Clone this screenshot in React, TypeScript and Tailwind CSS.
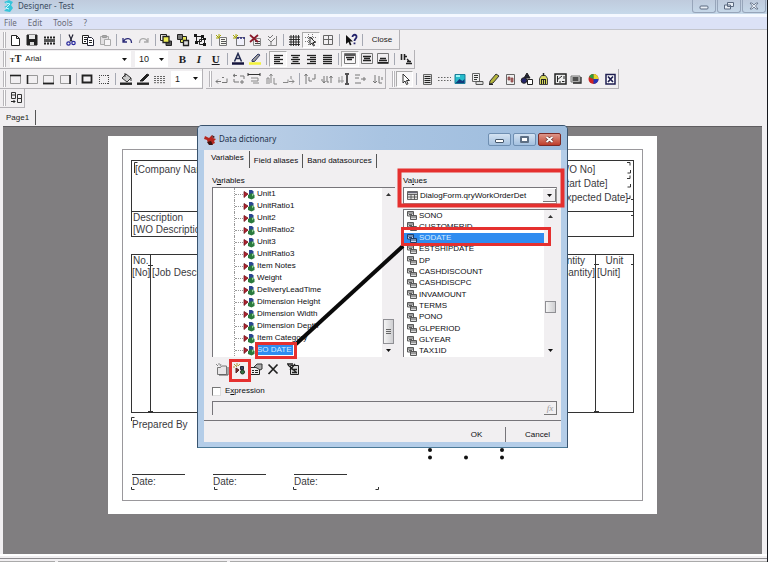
import React from "react";

type Kids = { children?: React.ReactNode };

/* ---------- icon drawings, all on a 14 x 14 grid ---------- */

function Ico({ children, size = 14 }: Kids & { size?: number }) {
  return (
    <svg width={size} height={size} viewBox="0 0 14 14" fill="none" stroke="#222" strokeWidth="1" aria-hidden="true" className="block shrink-0">
      {children}
    </svg>
  );
}

const bars = (ws: number[], x0 = (_w: number) => 3) =>
  ws.map((w, i) => <path key={i} d={`M${x0(w)} ${3.5 + i * 2}h${w}`} strokeWidth="1.3" />);

const icons: Record<string, React.ReactNode> = {
  fresh: <path d="M3.5 2.5h5l3 3v7h-8zM8.5 2.5v3h3" fill="#fff" />,
  save: (
    <>
      <path d="M2 2h10v10H2z" fill="#222" />
      <path d="M4 2h6v4H4z" fill="#e8e8e8" stroke="none" />
      <path d="M5 9h4v3H5z" fill="#ddd" stroke="none" />
    </>
  ),
  film: (
    <>
      <path d="M2 4.500h11M2 10.500h11" strokeWidth="2" strokeDasharray="2 1" />
      <path d="M2 7.500h11" strokeWidth="3" stroke="#555" />
    </>
  ),
  cut: (
    <>
      <path d="M5 1.500l3 7M9 1.500l-3 7" stroke="#223" strokeWidth="1.200" />
      <circle cx="4.500" cy="10.500" r="1.700" stroke="#25259c" strokeWidth="1.200" />
      <circle cx="9.500" cy="10" r="1.700" stroke="#25259c" strokeWidth="1.200" />
    </>
  ),
  copy: (
    <>
      <path d="M1.500 2.500h6v8h-6z" fill="#fff" />
      <path d="M3 4.500h3M3 6.500h3M3 8.500h2" />
      <path d="M6.500 4.500h4l2 2v6h-6z" fill="#fff" stroke="#223" />
      <path d="M8 7.500h3M8 9.500h3" />
    </>
  ),
  paste: (
    <>
      <path d="M2.500 3.500h8v8h-8z" stroke="#aaa" fill="#e2e0e2" />
      <path d="M4.500 2.500h4v2h-4z" stroke="#999" />
      <path d="M6.500 6.500h6v6h-6z" stroke="#aaa" fill="#f6f4f6" />
    </>
  ),
  undo: <path d="M3 5v4h4M3.500 8.500c2-4 8-4 8 1.500" stroke="#2b2b78" strokeWidth="1.300" />,
  redo: <path d="M11 5v4H7M10.500 8.500c-2-4-8-4-8 1.500" stroke="#aaa" strokeWidth="1.300" />,
  front: (
    <>
      <path d="M1.500 1.500h6v6h-6z" />
      <path d="M7 8h5.500v4.500H7z" fill="#555" />
      <path d="M4 3.500h6v6H4z" fill="#ecec55" stroke="#222" strokeWidth="1.300" />
    </>
  ),
  back: (
    <>
      <path d="M4.500 3.500h6v6h-6z" fill="#e4e45a" />
      <path d="M1.500 1.500h5v5h-5z" fill="#777" />
      <path d="M7.500 7.500h5v5h-5z" fill="#ddd" strokeWidth="1.300" />
    </>
  ),
  group: (
    <>
      <path d="M3.500 3.500h5v5h-5zM6.500 6.500h5v5h-5z" />
      <path d="M1 1h3v3H1zM8 2h3v3H8zM2 8h3v3H2zM10 10h3v3h-3zM10 5h3v2h-3z" fill="#181818" stroke="none" />
    </>
  ),
  addband: (
    <>
      <path d="M4.500 4.500h7v8h-7z" fill="#f6f6f0" stroke="#777" />
      <path d="M6 6.500h4M6 8.500h5M6 10.500h5" stroke="#555" />
      <path d="M1 2l3 3M4 1v4M1 5h3M6 2L4 4" stroke="#a4a400" />
    </>
  ),
  addform: (
    <>
      <path d="M4.500 4.500h8v8h-8z" fill="#f0f0fa" stroke="#777" />
      <path d="M5 5h8" stroke="#2a2a7c" strokeWidth="1.600" strokeDasharray="2 1" />
      <path d="M1 2l3 3M4 1v4M1 5h3M6 2L4 4" stroke="#a4a400" />
    </>
  ),
  del: (
    <>
      <path d="M5.500 5.500h7v7h-7z" fill="#f0eef0" stroke="#888" />
      <path d="M7 8.500h5M7 10.500h5" stroke="#444" />
      <path d="M2 2l8 7M10 2L2 9" stroke="#8a1a2a" strokeWidth="1.700" />
    </>
  ),
  props: (
    <>
      <path d="M11.500 3v9.500H3" stroke="#888" />
      <path d="M3 3l2 2 3-3M3 6l3 3 4-4M6 9v3" stroke="#777" />
    </>
  ),
  grid: <path d="M4 2v11M6.500 2v11M9 2v11M11.500 2v11M2 4h11M2 6.500h11M2 9h11M2 11.500h11" strokeWidth=".9" />,
  snap: (
    <>
      <path d="M4.500 1v11M8.500 1v11M1 4.500h11M1 8.500h11" stroke="#777" strokeDasharray="1 1" />
      <path d="M6 4v8l2-2 1.500 3 1-.5L9 9.500h2.500z" fill="#eee" stroke="#333" />
    </>
  ),
  fitgrid: <path d="M2.500 2.500h9v9h-9zM7.500 2.500v9M2.500 6.500h9" stroke="#666" />,
  help: (
    <>
      <path d="M2 2v9l2.500-2L6 12.500l1.500-1L6 8.500h3z" fill="#111" stroke="none" />
      <path d="M8.500 4c0-3 4.500-3 4 0 0 1.500-2 1.800-2 4M10.500 9.500v1.800" stroke="#24246c" strokeWidth="1.800" />
    </>
  ),
  fontcolor: (
    <>
      <path d="M3.500 9.500L7 1.500l3.500 8M5 6.500h4" stroke="#222a50" strokeWidth="1.500" />
      <path d="M1 11.500h12" strokeWidth="2.500" stroke="#14143c" />
    </>
  ),
  mark: (
    <>
      <path d="M4 8l6-6 2 1-5.500 6.500H4z" fill="#999" stroke="#333c66" />
      <path d="M1 11.500h12" strokeWidth="2.500" stroke="#f2f23a" />
    </>
  ),
  left: bars([9, 6, 9, 6, 9]),
  center: bars([9, 6, 9, 6, 9], (w) => 7.5 - w / 2),
  right: bars([9, 6, 9, 6, 9], (w) => 12 - w),
  justify: bars([9, 9, 9, 9, 9]),
  vtop: (
    <>
      <path d="M1.500 1.500h11v10h-11z" stroke="#777" />
      <path d="M2 3h10M3 5.500h8M4 7.500h5" strokeWidth="1.500" />
    </>
  ),
  vmid: (
    <>
      <path d="M1.500 1.500h11v10h-11z" stroke="#777" />
      <path d="M3 4.500h8M4 6.500h6M3 8.500h8" strokeWidth="1.300" />
    </>
  ),
  vbot: (
    <>
      <path d="M1.500 1.500h11v10h-11z" stroke="#777" />
      <path d="M4 6.500h6M3 8.500h8M2 10.700h10" strokeWidth="1.500" />
    </>
  ),
  rotate: (
    <>
      <path d="M2.500 2v6M5.500 2v6M5 4.500h3" strokeWidth="1.600" />
      <path d="M8 7l3 3M7 11.500h6M8 9.500h4" strokeWidth="1.300" />
    </>
  ),
  btop: (
    <>
      <path d="M2.500 3.500h10v8h-10z" stroke="#999" />
      <path d="M2 3.500h11" strokeWidth="1.600" />
    </>
  ),
  bleft: (
    <>
      <path d="M2.500 3.500h10v8h-10z" stroke="#999" />
      <path d="M2.500 3v9" strokeWidth="1.600" />
    </>
  ),
  bbottom: (
    <>
      <path d="M2.500 3.500h10v8h-10z" stroke="#999" />
      <path d="M2 11.500h11" strokeWidth="1.800" />
    </>
  ),
  bright: (
    <>
      <path d="M2.500 3.500h10v8h-10z" stroke="#999" />
      <path d="M12 3v9" strokeWidth="1.600" />
    </>
  ),
  ball: <path d="M2.500 3.500h9v7h-9z" strokeWidth="1.800" />,
  bnone: <path d="M2 3.500h10M2 11.500h10M2.500 3v9M11.500 3v9" stroke="#444" strokeDasharray="1 1" />,
  fill: (
    <>
      <path d="M3 6l4-4 5 4-4 4z" fill="#ccc" stroke="#333" />
      <path d="M6 5V1M12 6v3" stroke="#333" />
      <path d="M1 11.700h12" strokeWidth="2.400" stroke="#222" />
    </>
  ),
  pen: (
    <>
      <path d="M4 9l7-7 2 1-6 6z" fill="#222" />
      <path d="M1 11.700h12" strokeWidth="2.400" />
    </>
  ),
  style: <path d="M1 4.500h12M1 6.500h12M1 8.500h12M1 10.700h12" strokeDasharray="2 1" stroke="#666" />,
  al1: <path d="M8 5.500h2M2 9.500h5M4 7.500l-2 2 2 2M8 10.500h5v-4" stroke="#777" />,
  al2: <path d="M2 3.500h4M4 2L2 3.500 4 5M9 4h4v3M3 7v3h5M11 8v4M9 10h4" stroke="#777" />,
  al3: (
    <>
      <path d="M1 2.500h12M1 1v3M13 1v3" stroke="#333" />
      <path d="M4 6h7v3H4M6 11h6" stroke="#888" />
    </>
  ),
  al4: <path d="M3 12V6h2v6M7 11V2M5.500 4L7 2l1.500 2M10 6v6h3" stroke="#888" />,
  al5: <path d="M2 10.500h5v-3M8 9.500h5M11 7.500l2 2-2 2M10 4v3" stroke="#888" />,
  al6: <path d="M3 12V2M1.500 4L3 2l1.500 2M6 5v4h3M12 2v5H9" stroke="#777" />,
  al7: <path d="M4 4v7M2.500 9L4 11l1.500-2M1 8h2M7 4v6h2M11 11V4M9.500 6L11 4l1.500 2" stroke="#777" />,
  al8: (
    <>
      <path d="M3 5v6M6 4v7M2 9h6" stroke="#999" />
      <path d="M9 2h4M9 12h4M11 3v8" strokeWidth="1.500" />
    </>
  ),
  al9: <path d="M2 3h5M2 6h4M2 11h6M8 7h5M11 5v4" stroke="#777" />,
  al10: <path d="M5 3v8M3 9l2 2 2-2M9 4v7h3M12 5v3" stroke="#777" />,
  pointer: <path d="M5 2v9l2-2 1.500 3.500 1.500-.7L8.500 8.500h3z" fill="#fff" stroke="#333" />,
  memo: (
    <>
      <path d="M3.500 2.500h8v10h-8z" fill="#ddd" stroke="#666" />
      <path d="M4.500 4.500h6M4.500 6.500h6M4.500 8.500h6M4.500 10.500h6" />
    </>
  ),
  band: <path d="M1 5.500h13M1 8.500h13" strokeDasharray="1.500 1.500" stroke="#666" />,
  picture: (
    <>
      <path d="M2 2.500h10v9H2z" fill="#27bccb" stroke="#1b7d98" />
      <path d="M2.500 11l4-4 3 2 2-2v4z" fill="#123a7c" stroke="none" />
      <path d="M3 4h4" stroke="#9ff5f5" strokeWidth="2" />
    </>
  ),
  subrep: (
    <>
      <path d="M2.500 1.500h7v8h-7z" fill="#eee" stroke="#666" />
      <path d="M4 3.500h4M4 5.500h4M4 7.500h3" stroke="#333" />
      <path d="M6 9.500h7v3H6z" fill="#ddd" stroke="#555" />
    </>
  ),
  pencil: (
    <>
      <path d="M3 9l6-7 3 2-6 7-3.500 1z" fill="#b5b53c" stroke="#333" />
      <path d="M2 12.500h4" />
    </>
  ),
  check: (
    <>
      <path d="M3.500 2.500h8v10h-8z" fill="#eee" stroke="#666" />
      <path d="M5 5h2v3H5zM8 6h2v4H8z" fill="#a66" stroke="#844" strokeWidth=".7" />
    </>
  ),
  shapes: (
    <>
      <path d="M7 1l3 5H4z" fill="#223" />
      <circle cx="4" cy="8.500" r="2.800" fill="#24246a" />
      <path d="M7.500 7.500h5v5h-5z" fill="#fff" />
    </>
  ),
  barcode: (
    <>
      <path d="M3.500 6.500L5.500 3.500h4l2 3v6h-8z" fill="#d6d65c" stroke="#444" />
      <path d="M7.500 1v3" strokeWidth="1.500" />
      <path d="M5.500 8v4M7.500 8v4M9.500 8v4M5 7.500h5" strokeWidth="1" />
    </>
  ),
  chart: (
    <>
      <path d="M2 2h11v10H2z" fill="#eee" stroke="#222" strokeWidth="1.500" />
      <path d="M4.500 10V4M4 8l5-4M6 10h2M9 9.500h2.500M11 4v3" />
    </>
  ),
  rich: (
    <>
      <path d="M2 4h9v6H2z" fill="#ddd" stroke="#777" />
      <path d="M12 5v6H4M3.500 6h6M3.500 8h6" strokeWidth="1.300" />
    </>
  ),
  pie: (
    <>
      <circle cx="7.500" cy="7" r="5" fill="#cf2323" stroke="none" />
      <path d="M7.500 7V2a5 5 0 015 5z" fill="#e0d52b" stroke="none" />
      <path d="M7.500 7h5a5 5 0 01-5 5z" fill="#2333b5" stroke="none" />
      <path d="M7.500 7V2a5 5 0 00-4.500 3z" fill="#2a9c3c" stroke="none" />
    </>
  ),
  cross: (
    <>
      <path d="M3 2.500h9v9.500H3z" fill="#fff" stroke="#1e1e50" strokeWidth="1.500" />
      <path d="M5 4.500l5 5.500M10 4.500L5 10" stroke="#1e1e50" strokeWidth="1.700" />
    </>
  ),
  dialogs: (
    <>
      <path d="M2.500 1.500h4v6h-4zM2.500 4h4" stroke="#333" />
      <path d="M8.500 3.500h4v4h-4zM8.500 7.500h4v4h-4z" stroke="#333" />
      <path d="M2 10.500h4M4.500 9L6 10.500 4.500 12" />
    </>
  ),
  folder: (
    <>
      <path d="M2.500 5.500h3l1-1.500h5v8.500h-9z" fill="#e8e6e8" stroke="#777" />
      <path d="M13 5v8H4" stroke="#555" />
      <path d="M1 2l2 2M4 1v2M6 2L5 4" stroke="#888" />
    </>
  ),
  newvar: (
    <>
      <path d="M2 2l3 3M5 1v3M1 5h2M8 2L6 4" stroke="#b09a3c" />
      <path d="M4 6l3 2-3 3z" fill="#733" stroke="#522" />
      <path d="M8.500 4.500h3v3h-3z" fill="#346" stroke="#223" />
      <circle cx="10.500" cy="10" r="2" fill="#374" stroke="#232" />
    </>
  ),
  edit: (
    <>
      <path d="M1.500 5.500h9v7h-9z" fill="#eee" />
      <path d="M3 8.500h2M3 10.500h2M6 8.500h3M6 10.500h3" />
      <path d="M5 5l3-3h5v5l-2 1-3-2z" fill="#aaa" stroke="#333" />
    </>
  ),
  remove: <path d="M2.500 2.500l9 9M11.500 2.500l-9 9.500" strokeWidth="1.700" />,
  clip: (
    <>
      <path d="M4.500 3.500h8v9h-8z" fill="#ddd" />
      <path d="M2 3l9 8M1 2h6M4 8l5-6M6 10.500h5M6 7.500h5" strokeWidth="1.300" />
    </>
  ),
};

/* ---------- toolbar parts ---------- */

function Tool({ name, on = false }: { name: string; on?: boolean }) {
  return (
    <button
      type="button"
      aria-label={name}
      className={
        "flex h-4 min-w-0 flex-1 items-center justify-center " +
        (on ? "border border-t-[#aaa] border-r-white border-b-white border-l-[#aaa] bg-[#f8f7f8]" : "")
      }
    >
      <Ico>{icons[name]}</Ico>
    </button>
  );
}

const groupWidth: Record<number, string> = {
  1: "w-[17px]",
  2: "w-[33px]",
  3: "w-[50px]",
  4: "w-[66px]",
  5: "w-[83px]",
  12: "w-[199px]",
};

function Group({ names, on }: { names: string[]; on?: string }) {
  return (
    <div className={"flex shrink-0 items-center " + groupWidth[names.length]}>
      {names.map((n) => (
        <Tool key={n} name={n} on={n === on} />
      ))}
    </div>
  );
}

function Sep() {
  return (
    <div className="flex w-[6px] shrink-0 justify-center">
      <div className="h-3 w-px bg-[#a5a8b2]" />
    </div>
  );
}

function Bar({ children, label }: Kids & { label: string }) {
  return (
    <div role="toolbar" aria-label={label} className="flex h-full shrink-0 items-center border-r border-b border-[#b4b2b6]">
      <div className="mr-px ml-[3px] h-4 w-[3px] border-x border-[#b8b6ba] bg-white" />
      {children}
    </div>
  );
}

function Arrow() {
  return (
    <svg width="5" height="3" viewBox="0 0 5 3" aria-hidden="true" className="pointer-events-none block shrink-0">
      <path d="M0 0h5L2.500 3z" fill="#111" />
    </svg>
  );
}

function Combo({ label, value, children, className }: Kids & { label: string; value: string; className: string }) {
  return (
    <div className={"flex h-4 shrink-0 items-center bg-white pr-1 " + className}>
      {children}
      <select aria-label={label} defaultValue={value} className="min-w-0 flex-1 appearance-none bg-transparent px-1 leading-4 outline-none">
        <option>{value}</option>
      </select>
      <Arrow />
    </div>
  );
}

/* ---------- data ---------- */

const variables = [
  "Unit1", "UnitRatio1", "Unit2", "UnitRatio2", "Unit3", "UnitRatio3", "Item Notes", "Weight",
  "DeliveryLeadTime", "Dimension Height", "Dimension Width", "Dimension Depth", "Item Category", "SO DATE",
];

const fields = [
  "SONO", "CUSTOMERID", "SODATE", "ESTSHIPDATE", "DP", "CASHDISCOUNT", "CASHDISCPC", "INVAMOUNT",
  "TERMS", "PONO", "GLPERIOD", "GLYEAR", "TAX1ID",
];

/* ---------- report page ---------- */

function ReportPage() {
  return (
    <div className="relative mx-auto w-[549px] bg-white px-[14px] py-[13px] text-[10px] leading-3 text-[#3a3a3e]">
      <div className="border border-[#9a989c] px-2 pt-[10px] pb-3">
        <div className="h-[77px] border border-[#333]">
          <div className="flex h-[51px] justify-between border-b border-[#333] pl-[3px]">
            <div className="pt-[3px]">[Company Name]</div>
            <div className="w-[76px] space-y-[2px] pt-[3px] whitespace-nowrap">
              <div>[WO No]</div>
              <div>[Start Date]</div>
              <div>[Expected Date]</div>
            </div>
          </div>
          <div className="pl-px">Description</div>
          <div className="pl-px">[WO Description]</div>
        </div>

        <table className="mt-[17px] h-[159px] w-full table-fixed border-collapse border border-[#333]">
          <colgroup>
            <col className="w-[19px]" />
            <col />
            <col className="w-[60px]" />
            <col className="w-[38px]" />
          </colgroup>
          <thead>
            <tr className="h-3 text-left align-top">
              <th className="border-r border-[#333] p-0 pl-px font-normal">No.</th>
              <th className="p-0 font-normal" />
              <th className="border-r border-[#333] p-0 pr-[10px] text-right font-normal">Quantity</th>
              <th className="p-0 text-center font-normal">Unit</th>
            </tr>
          </thead>
          <tbody>
            <tr className="align-top">
              <td className="border-r border-[#333] p-0">[No]</td>
              <td className="p-0 pl-px">[Job Description]</td>
              <td className="border-r border-[#333] p-0 text-right">[Quantity]</td>
              <td className="p-0 pl-px">[Unit]</td>
            </tr>
          </tbody>
        </table>

        <div className="mt-[6px] pl-px">Prepared By</div>
        <div className="mt-[43px] flex gap-[28px] pl-px">
          {[1, 2, 3].map((n) => (
            <div key={n} className="w-[53px] border-t border-[#333] pt-px">Date:</div>
          ))}
        </div>
      </div>

      {/* corner ticks and selection handles of the placed objects */}
      <svg className="pointer-events-none absolute inset-0" width="549" height="379" fill="none" stroke="#333" aria-hidden="true">
        <path d="M26.500 37v-10.500h3M519 26.500h3v3M522.500 34v3h-3M519 42.500h3v-3M522.500 48v3h-3M519 62.500h3v-3M23.500 58v4M40 129.500h5M523 128.500h3M486 128.500h5M486 275.500h5M40 275.500h5M23.500 285v-3.500h3M23.500 351v2.500h3M106.500 351v2.500h3M185.500 351v2.500h3M270.500 351v2.500h-3" />
        <path d="M523 63.500h3M523 79.500h3" />
        <g fill="#111" stroke="none">
          <circle cx="322" cy="314" r="2" />
          <circle cx="394" cy="314" r="2" />
          <circle cx="322" cy="321.500" r="2" />
          <circle cx="358" cy="321.500" r="2" />
          <circle cx="394" cy="321.500" r="2" />
        </g>
      </svg>
    </div>
  );
}

/* ---------- dialog ---------- */

function VarIcon() {
  return (
    <svg width="12" height="11" viewBox="0 0 12 11" aria-hidden="true" className="block shrink-0">
      <path d="M1 2.500l4 2.500-4 3.500z" fill="#b31f2c" stroke="#6d1620" strokeWidth=".8" />
      <path d="M6 1h3l1.500 1.500V6H6z" fill="#2a4790" />
      <path d="M5 6l4-2 2.500 2v3L8.500 10.500 5 9z" fill="#2a7a3c" />
      <path d="M9 4.500l2 1-2 2z" fill="#8fce94" />
    </svg>
  );
}

function FieldIcon({ inverted = false }: { inverted?: boolean }) {
  return (
    <svg width="10" height="9" viewBox="0 0 10 9" fill={inverted ? "#bcd6f5" : "#dcdcdc"} stroke={inverted ? "#16335c" : "#4a4a4a"} strokeWidth=".9" aria-hidden="true" className="block shrink-0">
      <path d="M.5.5h6v4.500h-6zM.5 2h6M2 3.500h3" />
      <path d="M3.500 4.500h6v4h-6zM3.500 6h6" />
    </svg>
  );
}

function Scroll({ thumb, ridged = false }: { thumb: string; ridged?: boolean }) {
  return (
    <div aria-hidden="true" className="relative flex w-[13px] shrink-0 flex-col items-center justify-between bg-[#f1eff1] py-[5px]">
      <svg width="5" height="3" viewBox="0 0 5 3"><path d="M0 3h5L2.500 0z" fill="#333" /></svg>
      <div className={"absolute inset-x-px flex flex-col items-center justify-center gap-px border border-[#8f8f94] bg-linear-to-r from-[#f4f4f4] to-[#cfcfd2] " + thumb}>
        {ridged && [0, 1, 2].map((n) => <span key={n} className="h-px w-[5px] bg-[#666]" />)}
      </div>
      <Arrow />
    </div>
  );
}

const sunken = "border-t border-l border-t-[#77757a] border-l-[#77757a]";

function DataDictionary() {
  return (
    <section
      role="dialog"
      aria-label="Data dictionary"
      className="absolute inset-x-0 -top-[2px] mx-auto w-[371px] rounded-t-[5px] border border-[#39536e] border-b-[#4a7896] bg-[#b4cde8] px-[6px] pb-[5px] text-[8px] leading-3 text-[#0c0c10]"
    >
      <div className="-mx-[6px] flex h-6 items-center rounded-t-[4px] bg-linear-to-r from-[#c0d2e8] via-[#a9c4e2] to-[#9dbcdd] px-[6px] pt-[2px]">
        <svg width="13" height="13" viewBox="0 0 13 13" aria-hidden="true">
          <path d="M1 3l4 2 3-3 1 3 3 1-2 2 1 2-4 2-3-2-1-3-3-1z" fill="#b5261e" />
          <path d="M3 9l4-1 2 4H5zM8 2l3 2-2 1z" fill="#3c1512" />
        </svg>
        <h2 className="ml-[2px] flex-1 font-['Noto_Sans','Open_Sans',sans-serif] text-[8px] text-[#22334c]">Data dictionary</h2>
        <div className="flex gap-[2px]">
          <button type="button" aria-label="Minimize" className="flex h-[13px] w-[23px] items-center justify-center rounded-[2px] border border-[#6f8fb2] bg-linear-to-b from-[#d5e3f2] to-[#a3c0df]">
            <span className="mt-[3px] h-[4px] w-[9px] rounded-[1px] border border-[#46586c] bg-white" />
          </button>
          <button type="button" aria-label="Maximize" className="flex h-[13px] w-[23px] items-center justify-center rounded-[2px] border border-[#6f8fb2] bg-linear-to-b from-[#d5e3f2] to-[#a3c0df]">
            <span className="h-[7px] w-[9px] rounded-[1px] border-2 border-[#5d6f84] bg-white" />
          </button>
          <button type="button" aria-label="Close" className="flex h-[13px] w-[23px] items-center justify-center rounded-[2px] border border-[#7b2a26] bg-linear-to-b from-[#dd968a] to-[#bd3c2a]">
            <svg width="9" height="7" viewBox="0 0 9 7"><path d="M1.500 1l6 5M7.500 1l-6 5" stroke="#5b2a2a" strokeWidth="3" /><path d="M1.500 1l6 5M7.500 1l-6 5" stroke="#fff" strokeWidth="1.800" /></svg>
          </button>
        </div>
      </div>

      <div className="bg-[#f1eff1]">
        <div role="tablist" className="flex h-[18px] items-end pl-[2px]">
          <button type="button" role="tab" aria-selected="true" className="h-[17px] border-r border-[#555] px-[5px] pb-[3px]">Variables</button>
          <button type="button" role="tab" aria-selected="false" className="h-[14px] border-r border-[#555] px-1">Field aliases</button>
          <button type="button" role="tab" aria-selected="false" className="h-[14px] border-r border-[#555] px-1">Band datasources</button>
        </div>

        <div className="pt-[7px] pr-1 pl-2">
          <div className="flex justify-between">
            <div className="w-[183px]">
              <div id="vars">V<u>a</u>riables</div>
              <div className={"flex h-[170px] bg-white " + sunken}>
                <ul aria-labelledby="vars" className="flex-1 pl-[21px]">
                  {variables.map((v) => (
                    <li key={v} className="flex h-3 items-center border-l border-dotted border-[#999]">
                      <span className="w-2 border-t border-dotted border-[#999]" />
                      <VarIcon />
                      <span className={v === "SO DATE" ? "ml-px bg-[#2f8cf0] px-px leading-[10px] text-[#d5ecff]" : "ml-[2px]"}>{v}</span>
                    </li>
                  ))}
                </ul>
                <Scroll thumb="top-[131px] h-[25px]" ridged />
              </div>
            </div>

            <div className="w-[154px]">
              <label htmlFor="values" className="block">Va<u>l</u>ues</label>
              <div className={"flex h-[17px] items-center border-r border-b border-r-[#999] border-b-[#999] bg-white pl-[3px] " + sunken}>
                <svg width="11" height="9" viewBox="0 0 11 9" fill="#e4e4e4" stroke="#444" aria-hidden="true">
                  <path d="M.5.500h10v8H.5zM.5 3.500h10M4 3.500v5M7.500 3.500v5M.5 6h10" strokeWidth=".8" />
                  <path d="M1 1.500h9" stroke="#667" strokeWidth="1.500" />
                </svg>
                <select id="values" defaultValue="DialogForm.qryWorkOrderDet" className="min-w-0 flex-1 appearance-none bg-transparent pl-[2px] leading-4 outline-none">
                  <option>DialogForm.qryWorkOrderDet</option>
                </select>
                <span className="flex h-[13px] w-[13px] items-center justify-center border-r border-b border-[#777] bg-[#f1eff1]"><Arrow /></span>
              </div>
              <div className={"mt-[5px] flex h-[148px] bg-white " + sunken}>
                <ul aria-label="Fields" className="flex flex-1 flex-col justify-between">
                  {fields.map((f) => (
                    <li key={f} className={"flex h-[11px] items-center gap-[2px] pl-[3px] " + (f === "SODATE" ? "bg-[#2f8cf0] text-[#d5ecff]" : "")}>
                      <FieldIcon inverted={f === "SODATE"} />
                      <span>{f}</span>
                    </li>
                  ))}
                </ul>
                <Scroll thumb="top-[91px] h-3" />
              </div>
            </div>
          </div>

          <div className="mt-[5px] flex gap-[3px] pl-[3px]">
            {["folder", "newvar", "edit", "remove", "clip"].map((n) => (
              <button key={n} type="button" aria-label={n} className={n === "clip" ? "ml-[3px]" : ""}>
                <Ico>{icons[n]}</Ico>
              </button>
            ))}
          </div>

          <label className="mt-[9px] flex h-3 items-center gap-1">
            <input type="checkbox" className="h-[9px] w-[9px] appearance-none border border-t-[#777] border-r-[#ddd] border-b-[#ddd] border-l-[#777] bg-white" />
            <span>E<u>x</u>pression</span>
          </label>
          <div className={"mt-1 flex h-[14px] justify-end " + sunken}>
            <input aria-label="Expression text" className="min-w-0 flex-1 bg-transparent px-1 outline-none" />
            <button type="button" className="h-[13px] w-[13px] border-r border-b border-[#777] font-['Liberation_Serif',serif] text-[9px] leading-3 text-[#999] italic">fx</button>
          </div>
        </div>

        <div className="mt-[5px] flex justify-end border-t border-[#77757a] pt-[6px]">
          <button type="button" className="h-[15px] w-[58px] border-r border-[#77757a]">OK</button>
          <button type="button" className="h-[15px] w-[55px] pl-2">Cancel</button>
        </div>
      </div>

      {/* highlighted callouts drawn over the dialog */}
      <svg className="pointer-events-none absolute -top-px -left-px" width="371" height="322" fill="none" stroke="#e5302f" strokeWidth="3" aria-hidden="true">
        <path d="M99 219L206 121" stroke="#0a0a0a" strokeWidth="4" />
        <rect x="202.500" y="45.500" width="163" height="35" strokeWidth="4" />
        <rect x="205.500" y="103.500" width="147" height="16" />
        <rect x="59.500" y="218.500" width="39" height="14" />
        <rect x="33.500" y="235.500" width="19" height="20" />
      </svg>
    </section>
  );
}

/* ---------- main window ---------- */

export default function App() {
  return (
    <div className="flex min-h-screen flex-col overflow-hidden border-r border-[#15171c] bg-[#f1eff1] font-['Liberation_Sans',sans-serif] text-[8px] leading-3 text-[#1c1c20]">
      <header className="flex h-[14px] items-start bg-linear-to-b from-[#bfcbdd] to-[#c6d9ea] pl-[2px]">
        <svg width="13" height="13" viewBox="0 0 13 13" aria-hidden="true">
          <path d="M2 2l5-2 4 2-2 3 2 3-3 4-6-1 3-3-3-1 4-2z" fill="#35c4da" />
          <path d="M4 3l4 1-4 4 3 1" fill="none" stroke="#c8fbff" />
        </svg>
        <h1 className="ml-[3px] flex-1 font-['Noto_Sans','Open_Sans',sans-serif] text-[8px] leading-3 text-[#3a4a5e]">Designer - Test</h1>
        <div className="flex gap-px pr-px">
          {["Minimize", "Restore", "Close"].map((n, i) => (
            <button key={n} type="button" aria-label={n} className="flex h-[13px] w-[24px] items-center justify-center rounded-b-[3px] border border-t-0 border-[#97a5ba]">
              <svg width="10" height="8" viewBox="0 0 10 8" fill="#e8eef6" stroke="#5c6a80">
                {i === 0 && <rect x="1" y="4" width="8" height="3" rx="1" />}
                {i === 1 && <path d="M3.500.500h6v4h-6zM.5 3h6v4H.5z" />}
                {i === 2 && <path d="M1 1h2l2 2 2-2h2L6.500 4 9 7H7L5 5 3 7H1l2.500-3z" strokeWidth=".8" />}
              </svg>
            </button>
          ))}
        </div>
      </header>

      <nav className="flex h-[16px] items-center gap-[11px] border-t-[3px] border-b border-t-[#f4f8ff] border-b-[#c3c5cc] bg-[#dce2f6] pl-1 font-['Noto_Sans','Open_Sans',sans-serif] text-[8px] text-[#6a6c76]">
        <button type="button">File</button>
        <button type="button">Edit</button>
        <button type="button">Tools</button>
        <button type="button">?</button>
      </nav>

      <div className="flex h-[20px]">
        <Bar label="Standard">
          <Group names={["fresh", "save", "film"]} />
          <Sep />
          <Group names={["cut", "copy", "paste"]} />
          <Sep />
          <Group names={["undo", "redo"]} />
          <Sep />
          <Group names={["front", "back", "group"]} />
          <Sep />
          <Group names={["addband", "addform", "del", "props"]} />
          <Sep />
          <Group names={["grid", "snap", "fitgrid"]} on="snap" />
          <Sep />
          <Group names={["help"]} />
          <Sep />
          <button type="button" className="w-[34px] text-center">Close</button>
        </Bar>
      </div>

      <div className="flex h-[19px]">
        <Bar label="Text">
          <Combo label="Font" value="Arial" className="ml-[3px] w-[121px]">
            <span className="font-['Liberation_Serif',serif] text-[10px] font-bold"><span className="text-[7px]">T</span>T</span>
          </Combo>
          <Combo label="Size" value="10" className="ml-[4px] w-[33px] text-[9px]" />
          <div className="ml-[6px] flex w-[50px] font-['Liberation_Serif',serif] text-[11px] font-bold">
            <button type="button" className="flex-1">B</button>
            <button type="button" className="flex-1 italic">I</button>
            <button type="button" className="flex-1 underline">U</button>
          </div>
          <Sep />
          <Group names={["fontcolor", "mark"]} />
          <Sep />
          <Group names={["left", "center", "right", "justify"]} on="left" />
          <Sep />
          <Group names={["vtop", "vmid", "vbot"]} on="vtop" />
          <Sep />
          <Group names={["rotate"]} />
        </Bar>
      </div>

      <div className="flex h-[20px] gap-[3px]">
        <Bar label="Frame">
          <Group names={["btop", "bleft", "bbottom", "bright"]} />
          <Sep />
          <Group names={["ball", "bnone"]} />
          <Sep />
          <Group names={["fill", "pen", "style"]} />
          <Combo label="Width" value="1" className="ml-[3px] w-[31px] text-[9px]" />
        </Bar>
        <Bar label="Align">
          <Group names={["al1", "al2", "al3", "al4", "al5"]} />
          <Sep />
          <Group names={["al6", "al7", "al8", "al9", "al10"]} />
        </Bar>
        <Bar label="Objects">
          <Group names={["pointer"]} on="pointer" />
          <Sep />
          <Group names={["memo", "band", "picture", "subrep", "pencil", "check", "shapes", "barcode", "chart", "rich", "pie", "cross"]} />
        </Bar>
      </div>

      <div className="flex h-[19px]">
        <Bar label="Dialog controls">
          <Group names={["dialogs"]} />
        </Bar>
      </div>

      <div role="tablist" className="flex h-[18px] items-start pt-[2px]">
        <button type="button" role="tab" aria-selected="true" className="h-[15px] border-r border-[#555] px-[6px]">Page1</button>
      </div>

      <main className="relative mr-[5px] ml-[3px] flex-1 border-t border-[#5f5d60] bg-[#807e80] pt-[9px] pb-[39px]">
        <ReportPage />
        <DataDictionary />
      </main>

      <footer className="flex h-2 flex-col justify-between border-t-2 border-white pt-[2px]">
        <div className="h-px bg-[#8c8a8e]" />
        <div className="flex gap-[3px]">
          <div className="h-px w-[55px] bg-[#aaa]" />
          <div className="h-px w-[169px] bg-[#aaa]" />
          <div className="h-px flex-1 bg-[#aaa]" />
        </div>
      </footer>
    </div>
  );
}
